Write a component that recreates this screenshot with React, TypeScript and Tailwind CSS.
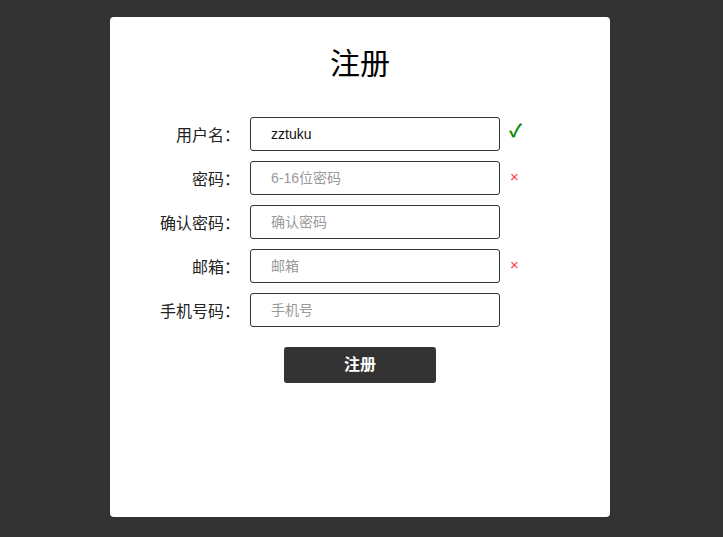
import React from "react";

const font = { fontFamily: '"Liberation Sans", "Noto Sans CJK SC", sans-serif' };

function Row({ label, value, placeholder, status }: { label: string; value?: string; placeholder: string; status?: "ok" | "err" }) {
  return (
    <div className="flex items-center h-[34px] mb-[10px]">
      <label className="w-[130px] mr-[10px] pt-[3px] text-right text-[16px] text-[#222]">{label}：</label>
      <div className="w-[250px] h-[34px] border border-[#333] rounded-[3px] flex items-center pl-[20px] text-[14px]">
        {value ? <span className="text-[#111]">{value}</span> : <span className="text-[#999]">{placeholder}</span>}
      </div>
      {status === "ok" && <span className="ml-[9px] -mt-[6px] text-[18px] leading-none text-[#0a8a0a] font-bold">✓</span>}
      {status === "err" && <span className="ml-[10px] -mt-[4px] text-[15px] leading-none text-[#ff3b3b]">×</span>}
    </div>
  );
}

export default function App() {
  return (
    <div className="min-h-[537px] w-full bg-[#333333] pt-[17px]" style={font}>
      <div className="ml-[110px] w-[500px] h-[500px] bg-white rounded-[4px] flex flex-col">
        <h1 className="pt-[27px] h-[66px] leading-[40px] text-center text-[30px] text-black">注册</h1>
        <div className="mt-[34px] flex flex-col">
          <Row label="用户名" value="zztuku" placeholder="" status="ok" />
          <Row label="密码" placeholder="6-16位密码" status="err" />
          <Row label="确认密码" placeholder="确认密码" />
          <Row label="邮箱" placeholder="邮箱" status="err" />
          <Row label="手机号码" placeholder="手机号" />
        </div>
        <div className="flex justify-center mt-[10px]">
          <button className="w-[152px] h-[36px] bg-[#333333] text-white text-[16px] font-semibold rounded-[3px]">注册</button>
        </div>
      </div>
    </div>
  );
}
